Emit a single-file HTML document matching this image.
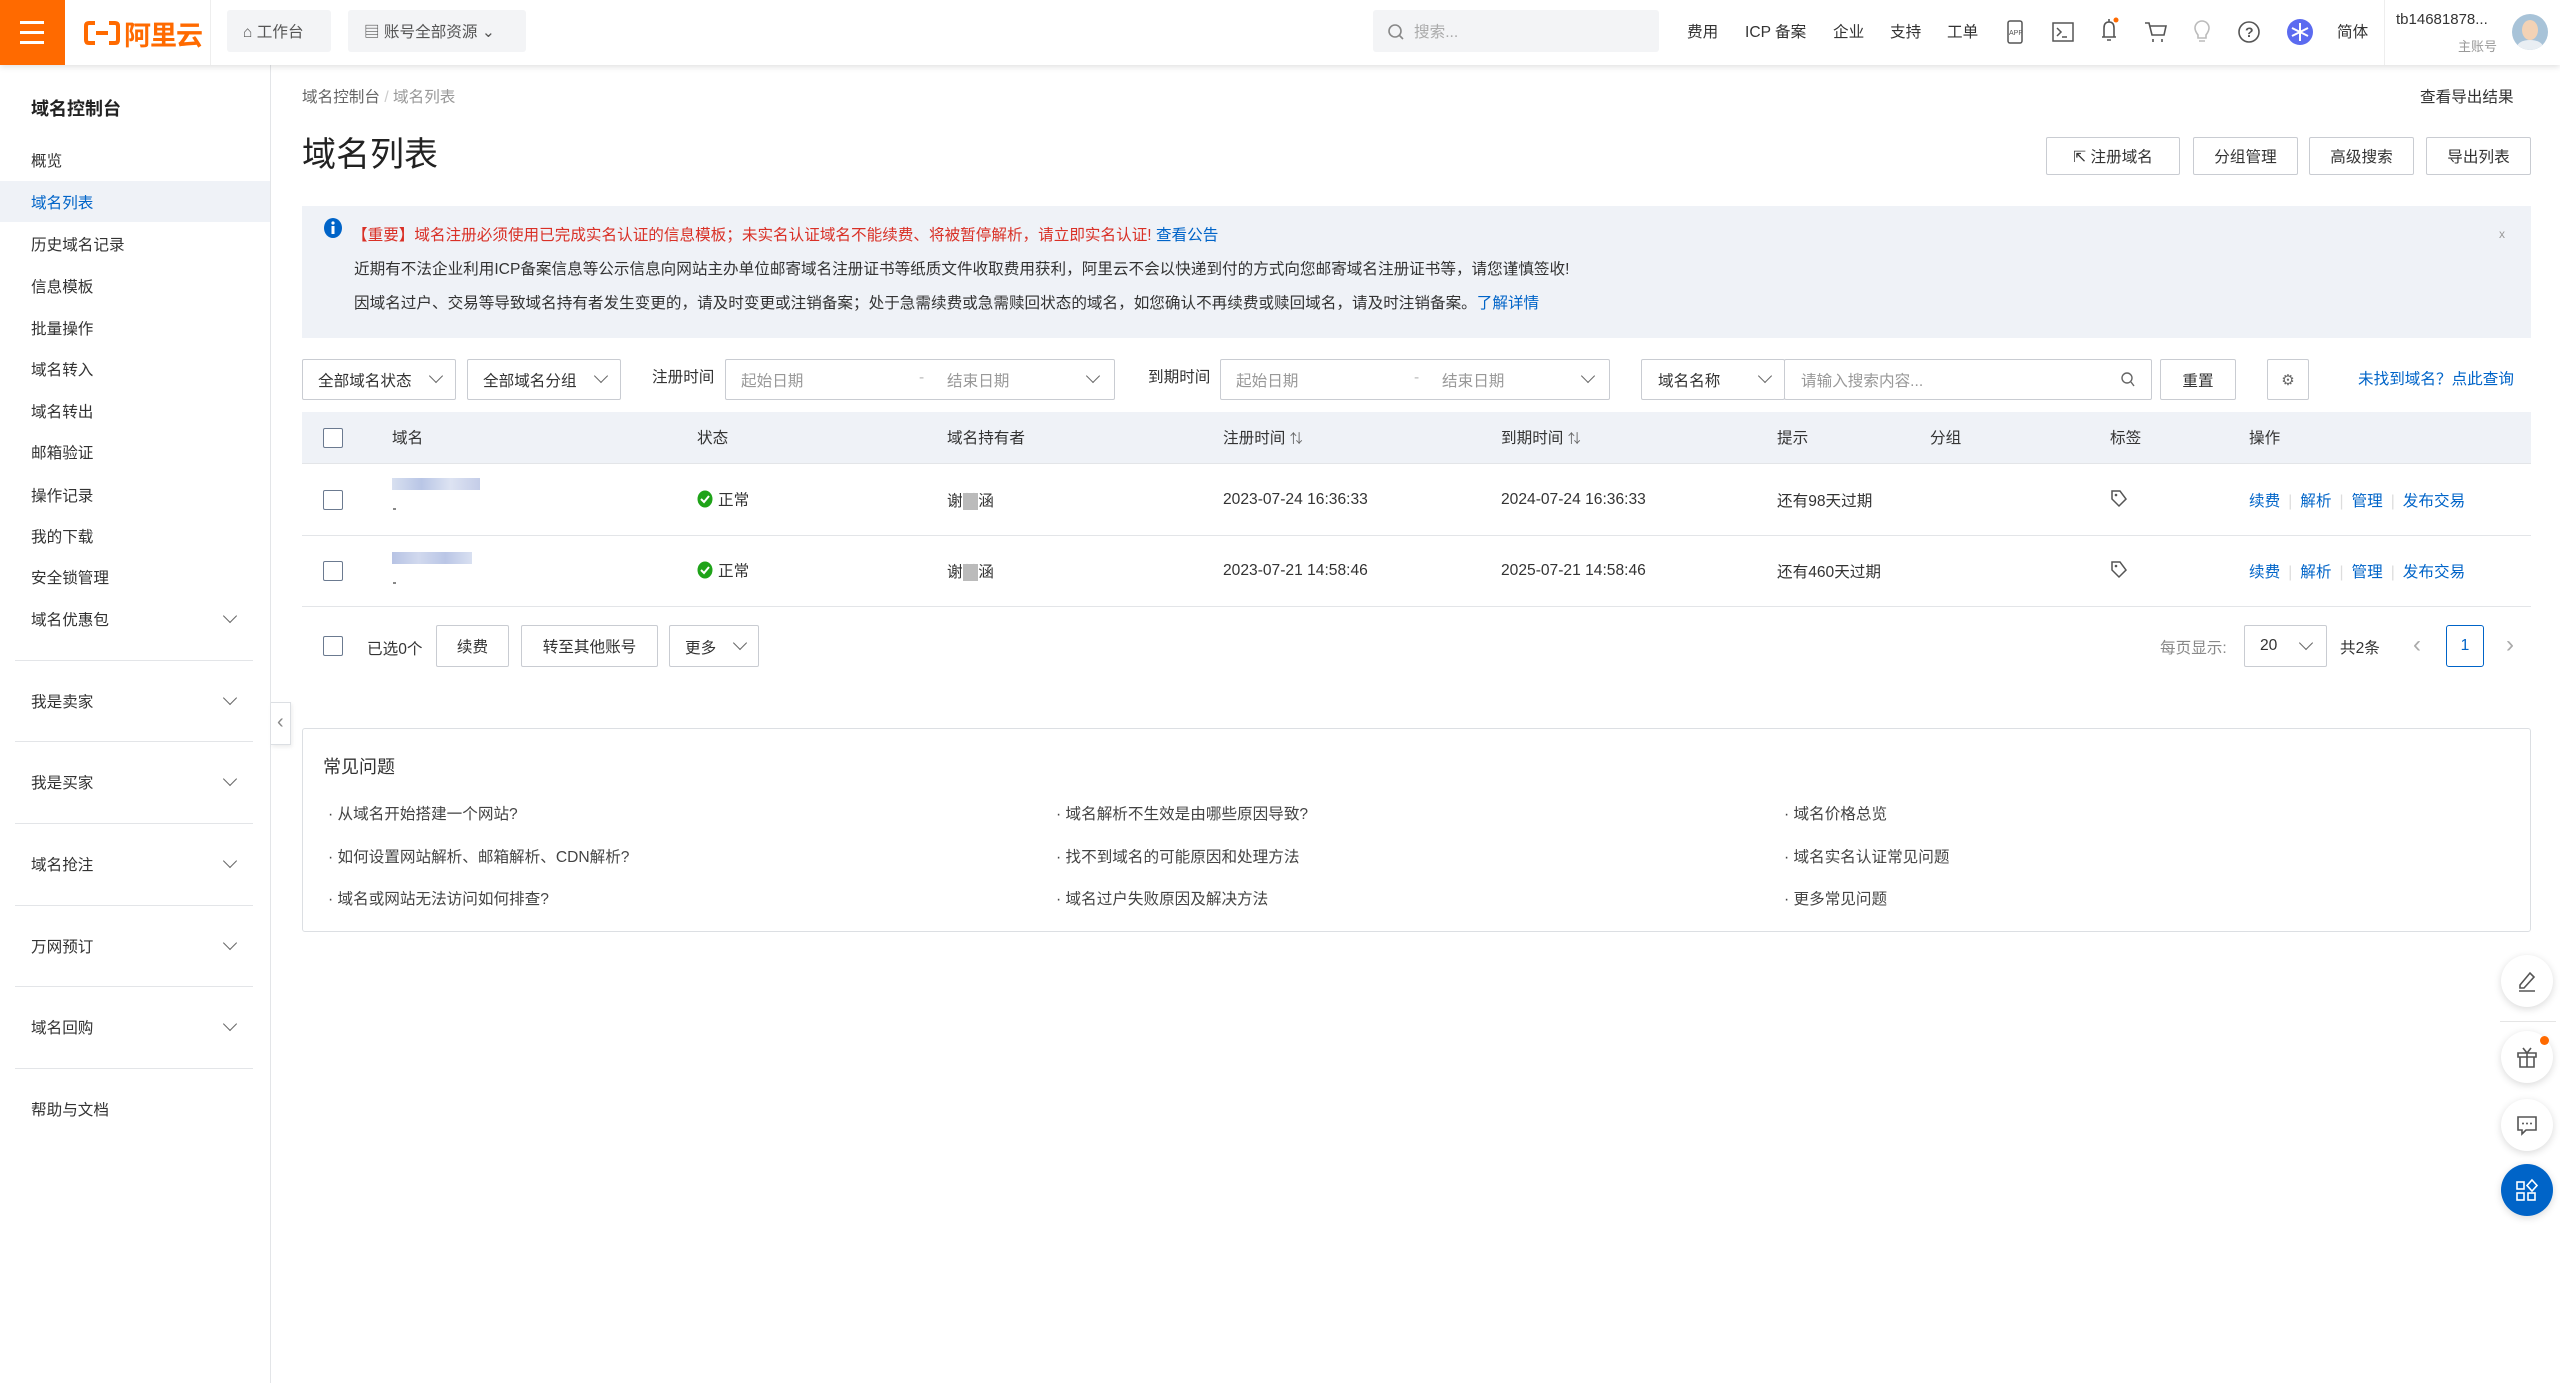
<!DOCTYPE html>
<html><head><meta charset="utf-8">
<style>
*{box-sizing:border-box;margin:0;padding:0}
body{width:2560px;height:1383px;overflow:hidden;background:#fff;font-family:"Liberation Sans","Noto Sans CJK SC",sans-serif;font-size:15.6px;color:#333;position:relative}
.a{position:absolute;white-space:nowrap}
.hdr{position:absolute;left:0;top:0;width:2560px;height:65px;background:#fff;box-shadow:0 2px 6px rgba(0,0,0,.12);z-index:5}
.btn{position:absolute;border:1px solid #c9ccd2;background:#fff;border-radius:2px;display:flex;align-items:center;justify-content:center;color:#333;font-size:15.6px}
.sel{position:absolute;border:1px solid #c9ccd2;background:#fff;border-radius:2px;font-size:15.6px;color:#333}
.chev{position:absolute;width:10px;height:10px;border-right:1.6px solid #666;border-bottom:1.6px solid #666;transform:rotate(45deg)}
.cb{position:absolute;width:20px;height:20px;border:1.5px solid #6b7a90;border-radius:2px;background:#fff}
.lnk{color:#0064c8}
.sp{color:#ddd;margin:0 8px}
.side{color:#333;font-size:15.6px}
.dv{position:absolute;left:15px;width:238px;height:1px;background:#e3e5e8}
.fab{position:absolute;left:2501px;width:52px;height:52px;border-radius:50%;background:#fff;box-shadow:0 2px 8px rgba(0,0,0,.15);display:flex;align-items:center;justify-content:center}
</style></head><body>

<div class="hdr">
  <div class="a" style="left:0;top:0;width:65px;height:65px;background:#ff6a00"></div>
  <div class="a" style="left:20px;top:21px;width:24px;height:3px;background:#fff"></div>
  <div class="a" style="left:20px;top:31px;width:24px;height:3px;background:#fff"></div>
  <div class="a" style="left:20px;top:41px;width:24px;height:3px;background:#fff"></div>
  <svg class="a" style="left:84px;top:20px" width="36" height="26" viewBox="0 0 36 26"><path d="M11 3H5Q2 3 2 6V20Q2 23 5 23H11M25 3H31Q34 3 34 6V20Q34 23 31 23H25M12 13H24" fill="none" stroke="#ff6a00" stroke-width="4"/></svg>
  <div class="a" style="left:124px;top:14px;font-size:27px;font-weight:bold;color:#ff6a00;letter-spacing:-1px">阿里云</div>
  <div class="a" style="left:210px;top:0;width:1px;height:65px;background:#eee"></div>
  <div class="a" style="left:227px;top:10px;width:104px;height:42px;background:#f3f4f6;border-radius:3px"></div>
  <div class="a" style="left:243px;top:20px;font-size:15.6px;color:#555">⌂ 工作台</div>
  <div class="a" style="left:348px;top:10px;width:178px;height:42px;background:#f3f4f6;border-radius:3px"></div>
  <div class="a" style="left:364px;top:20px;font-size:15.6px;color:#555">▤ 账号全部资源 ⌄</div>
  <div class="a" style="left:1373px;top:10px;width:286px;height:42px;background:#f3f4f6;border-radius:3px"></div>
  <svg class="a" style="left:1387px;top:23px" width="18" height="18"><circle cx="8" cy="8" r="6" fill="none" stroke="#888" stroke-width="1.6"/><path d="M12 12L16 16" stroke="#888" stroke-width="1.6"/></svg>
  <div class="a" style="left:1414px;top:20px;color:#aaa">搜索...</div>
  <div class="a" style="left:1687px;top:20px;color:#333">费用</div>
  <div class="a" style="left:1745px;top:20px;color:#333">ICP 备案</div>
  <div class="a" style="left:1833px;top:20px;color:#333">企业</div>
  <div class="a" style="left:1890px;top:20px;color:#333">支持</div>
  <div class="a" style="left:1947px;top:20px;color:#333">工单</div>
  <svg class="a" style="left:2005px;top:20px" width="20" height="24"><rect x="3" y="1" width="14" height="22" rx="2" fill="none" stroke="#555" stroke-width="1.5"/><text x="4" y="15" font-size="7" fill="#555" font-family="Liberation Sans">APP</text></svg>
  <svg class="a" style="left:2052px;top:22px" width="22" height="20"><rect x="1" y="1" width="20" height="18" fill="none" stroke="#555" stroke-width="1.5"/><path d="M5 6L9 10L5 14M10 15H15" fill="none" stroke="#555" stroke-width="1.5"/></svg>
  <svg class="a" style="left:2098px;top:17px" width="22" height="28"><path d="M6 20V11Q6 5 11 5Q16 5 16 11V20H4H18M9 23H13M11 2V5" fill="none" stroke="#555" stroke-width="1.6"/><circle cx="18" cy="3" r="2.5" fill="#ff6a00"/></svg>
  <svg class="a" style="left:2144px;top:21px" width="24" height="22"><path d="M1 2H5L8 14H20L22 5H6M9 18V21M18 18V21" fill="none" stroke="#555" stroke-width="1.6"/></svg>
  <svg class="a" style="left:2193px;top:19px" width="18" height="26"><path d="M5 16Q2 12 2 9A7 7 0 0 1 16 9Q16 12 13 16V19H5ZM6 22H12" fill="none" stroke="#bbb" stroke-width="1.6"/></svg>
  <svg class="a" style="left:2237px;top:20px" width="24" height="24"><circle cx="12" cy="12" r="10" fill="none" stroke="#555" stroke-width="1.6"/><text x="8" y="17" font-size="14" font-weight="bold" fill="#555" font-family="Liberation Sans">?</text></svg>
  <svg class="a" style="left:2286px;top:18px" width="28" height="28"><circle cx="14" cy="14" r="13" fill="#5b6bf0"/><path d="M14 5V23M6 10L22 18M6 18L22 10" stroke="#fff" stroke-width="2"/></svg>
  <div class="a" style="left:2337px;top:20px;color:#333">简体</div>
  <div class="a" style="left:2384px;top:0;width:1px;height:65px;background:#eee"></div>
  <div class="a" style="left:2396px;top:11px;font-size:15px;color:#333">tb14681878...</div>
  <div class="a" style="left:2458px;top:36px;font-size:13px;color:#999">主账号</div>
  <div class="a" style="left:2512px;top:14px;width:36px;height:36px;border-radius:50%;background:#a8c3d8;overflow:hidden"><div style="position:absolute;left:10px;top:6px;width:16px;height:20px;border-radius:50%;background:#f3d2b5"></div><div style="position:absolute;left:5px;top:26px;width:26px;height:14px;border-radius:50%;background:#e9eef3"></div></div>
</div>

<!-- sidebar -->
<div class="a" style="left:270px;top:65px;width:1px;height:1318px;background:#e3e5e8"></div>
<div class="a" style="left:31px;top:95px;font-size:18px;font-weight:bold;color:#222">域名控制台</div>
<div class="a side" style="left:31px;top:149px">概览</div>
<div class="a" style="left:0;top:181px;width:270px;height:41px;background:#eff2f7"></div>
<div class="a side" style="left:31px;top:191px;color:#0064c8">域名列表</div>
<div class="a side" style="left:31px;top:233px">历史域名记录</div>
<div class="a side" style="left:31px;top:275px">信息模板</div>
<div class="a side" style="left:31px;top:317px">批量操作</div>
<div class="a side" style="left:31px;top:358px">域名转入</div>
<div class="a side" style="left:31px;top:400px">域名转出</div>
<div class="a side" style="left:31px;top:441px">邮箱验证</div>
<div class="a side" style="left:31px;top:484px">操作记录</div>
<div class="a side" style="left:31px;top:525px">我的下载</div>
<div class="a side" style="left:31px;top:566px">安全锁管理</div>
<div class="a side" style="left:31px;top:608px">域名优惠包</div><div class="chev" style="left:225px;top:611px"></div>
<div class="dv" style="top:660px"></div>
<div class="a side" style="left:31px;top:690px">我是卖家</div><div class="chev" style="left:225px;top:693px"></div>
<div class="dv" style="top:741px"></div>
<div class="a side" style="left:31px;top:771px">我是买家</div><div class="chev" style="left:225px;top:774px"></div>
<div class="dv" style="top:823px"></div>
<div class="a side" style="left:31px;top:853px">域名抢注</div><div class="chev" style="left:225px;top:856px"></div>
<div class="dv" style="top:905px"></div>
<div class="a side" style="left:31px;top:935px">万网预订</div><div class="chev" style="left:225px;top:938px"></div>
<div class="dv" style="top:986px"></div>
<div class="a side" style="left:31px;top:1016px">域名回购</div><div class="chev" style="left:225px;top:1019px"></div>
<div class="dv" style="top:1068px"></div>
<div class="a side" style="left:31px;top:1098px">帮助与文档</div>
<div class="a" style="left:271px;top:702px;width:20px;height:43px;background:#fff;border:1px solid #dcdfe3;border-left:none;box-shadow:1px 2px 4px rgba(0,0,0,.08)"></div>
<div class="a" style="left:277px;top:711px;color:#888;font-size:20px">‹</div>

<!-- content -->
<div class="a" style="left:302px;top:85px;color:#666">域名控制台 <span style="color:#ccc">/</span> <span style="color:#999">域名列表</span></div>
<div class="a" style="left:2420px;top:85px;color:#333">查看导出结果</div>
<div class="a" style="left:302px;top:127px;font-size:34px;color:#222">域名列表</div>
<div class="btn" style="left:2046px;top:137px;width:134px;height:38px">⇱&nbsp;注册域名</div>
<div class="btn" style="left:2193px;top:137px;width:105px;height:38px">分组管理</div>
<div class="btn" style="left:2309px;top:137px;width:105px;height:38px">高级搜索</div>
<div class="btn" style="left:2426px;top:137px;width:105px;height:38px">导出列表</div>

<div class="a" style="left:302px;top:206px;width:2229px;height:132px;background:#eff2f7"></div>
<svg class="a" style="left:323px;top:217px" width="20" height="22"><ellipse cx="10" cy="11" rx="9" ry="10" fill="#0064c8"/><rect x="8.5" y="9" width="3" height="8" fill="#fff"/><circle cx="10" cy="6" r="1.6" fill="#fff"/></svg>
<div class="a" style="left:352px;top:223px;color:#d93026">【重要】域名注册必须使用已完成实名认证的信息模板；未实名认证域名不能续费、将被暂停解析，请立即实名认证! <span class="lnk">查看公告</span></div>
<div class="a" style="left:354px;top:257px;color:#333">近期有不法企业利用ICP备案信息等公示信息向网站主办单位邮寄域名注册证书等纸质文件收取费用获利，阿里云不会以快递到付的方式向您邮寄域名注册证书等，请您谨慎签收!</div>
<div class="a" style="left:354px;top:291px;color:#333">因域名过户、交易等导致域名持有者发生变更的，请及时变更或注销备案；处于急需续费或急需赎回状态的域名，如您确认不再续费或赎回域名，请及时注销备案。<span class="lnk">了解详情</span></div>
<div class="a" style="left:2499px;top:227px;color:#999;font-size:12px">x</div>

<!-- filters -->
<div class="sel" style="left:302px;top:359px;width:154px;height:41px"><span class="a" style="left:15px;top:9px">全部域名状态</span><div class="chev" style="left:128px;top:11px"></div></div>
<div class="sel" style="left:467px;top:359px;width:154px;height:41px"><span class="a" style="left:15px;top:9px">全部域名分组</span><div class="chev" style="left:128px;top:11px"></div></div>
<div class="a" style="left:652px;top:365px">注册时间</div>
<div class="sel" style="left:725px;top:359px;width:390px;height:41px"><span class="a" style="left:15px;top:9px;color:#999">起始日期</span><span class="a" style="left:193px;top:9px;color:#bbb">-</span><span class="a" style="left:221px;top:9px;color:#999">结束日期</span><div class="chev" style="left:362px;top:11px"></div></div>
<div class="a" style="left:1148px;top:365px">到期时间</div>
<div class="sel" style="left:1220px;top:359px;width:390px;height:41px"><span class="a" style="left:15px;top:9px;color:#999">起始日期</span><span class="a" style="left:193px;top:9px;color:#bbb">-</span><span class="a" style="left:221px;top:9px;color:#999">结束日期</span><div class="chev" style="left:362px;top:11px"></div></div>
<div class="sel" style="left:1641px;top:359px;width:144px;height:41px"><span class="a" style="left:16px;top:9px">域名名称</span><div class="chev" style="left:118px;top:11px"></div></div>
<div class="sel" style="left:1784px;top:359px;width:368px;height:41px"><span class="a" style="left:16px;top:9px;color:#999">请输入搜索内容...</span><svg class="a" style="left:336px;top:12px" width="14" height="16"><circle cx="6" cy="6" r="5" fill="none" stroke="#666" stroke-width="1.4"/><path d="M10 10L13 14" stroke="#666" stroke-width="1.4"/></svg></div>
<div class="btn" style="left:2160px;top:359px;width:76px;height:41px">重置</div>
<div class="btn" style="left:2267px;top:359px;width:42px;height:41px;color:#666;font-size:15px">⚙</div>
<div class="a lnk" style="left:2358px;top:367px">未找到域名？点此查询</div>

<!-- table -->
<div class="a" style="left:302px;top:412px;width:2229px;height:52px;background:#eff2f7;border-bottom:1px solid #e3e5e8"></div>
<div class="cb" style="left:323px;top:428px"></div>
<div class="a" style="left:392px;top:426px">域名</div>
<div class="a" style="left:697px;top:426px">状态</div>
<div class="a" style="left:947px;top:426px">域名持有者</div>
<div class="a" style="left:1223px;top:426px">注册时间 <span style="font-size:13px;color:#666">⇅</span></div>
<div class="a" style="left:1501px;top:426px">到期时间 <span style="font-size:13px;color:#666">⇅</span></div>
<div class="a" style="left:1777px;top:426px">提示</div>
<div class="a" style="left:1930px;top:426px">分组</div>
<div class="a" style="left:2110px;top:426px">标签</div>
<div class="a" style="left:2249px;top:426px">操作</div>

<div class="a" style="left:302px;top:535px;width:2229px;height:1px;background:#e3e5e8"></div>
<div class="a" style="left:302px;top:606px;width:2229px;height:1px;background:#e3e5e8"></div>

<div class="cb" style="left:323px;top:490px"></div>
<div class="a" style="left:392px;top:478px;width:88px;height:12px;background:linear-gradient(90deg,#d8e0f0,#b9c6e6,#dde3f2,#c4cde8)"></div>
<div class="a" style="left:393px;top:508px;width:3px;height:2px;background:#888"></div>
<svg class="a" style="left:697px;top:490px" width="16" height="18"><ellipse cx="8" cy="9" rx="7.5" ry="8.5" fill="#1fa319"/><path d="M4 9L7 12L12 6" fill="none" stroke="#fff" stroke-width="2"/></svg>
<div class="a" style="left:718px;top:488px">正常</div>
<div class="a" style="left:947px;top:489px">谢<span style="background:#bbb;color:#bbb">某</span>涵</div>
<div class="a" style="left:1223px;top:491px">2023-07-24 16:36:33</div>
<div class="a" style="left:1501px;top:491px">2024-07-24 16:36:33</div>
<div class="a" style="left:1777px;top:489px">还有98天过期</div>
<svg class="a" style="left:2110px;top:489px" width="18" height="20"><path d="M2 2H10L16 10L9 17L2 10Z" fill="none" stroke="#555" stroke-width="1.5"/><circle cx="6" cy="6" r="1.3" fill="#555"/></svg>
<div class="a lnk" style="left:2249px;top:489px">续费<span class="sp">|</span>解析<span class="sp">|</span>管理<span class="sp">|</span>发布交易</div>

<div class="cb" style="left:323px;top:561px"></div>
<div class="a" style="left:392px;top:552px;width:80px;height:12px;background:linear-gradient(90deg,#b7c3e4,#d1d9ee,#bac6e6,#d9e0f1)"></div>
<div class="a" style="left:393px;top:582px;width:3px;height:2px;background:#888"></div>
<svg class="a" style="left:697px;top:561px" width="16" height="18"><ellipse cx="8" cy="9" rx="7.5" ry="8.5" fill="#1fa319"/><path d="M4 9L7 12L12 6" fill="none" stroke="#fff" stroke-width="2"/></svg>
<div class="a" style="left:718px;top:559px">正常</div>
<div class="a" style="left:947px;top:560px">谢<span style="background:#bbb;color:#bbb">某</span>涵</div>
<div class="a" style="left:1223px;top:562px">2023-07-21 14:58:46</div>
<div class="a" style="left:1501px;top:562px">2025-07-21 14:58:46</div>
<div class="a" style="left:1777px;top:560px">还有460天过期</div>
<svg class="a" style="left:2110px;top:560px" width="18" height="20"><path d="M2 2H10L16 10L9 17L2 10Z" fill="none" stroke="#555" stroke-width="1.5"/><circle cx="6" cy="6" r="1.3" fill="#555"/></svg>
<div class="a lnk" style="left:2249px;top:560px">续费<span class="sp">|</span>解析<span class="sp">|</span>管理<span class="sp">|</span>发布交易</div>

<!-- bottom bar -->
<div class="cb" style="left:323px;top:636px"></div>
<div class="a" style="left:367px;top:637px">已选0个</div>
<div class="btn" style="left:436px;top:625px;width:73px;height:42px">续费</div>
<div class="btn" style="left:521px;top:625px;width:137px;height:42px">转至其他账号</div>
<div class="sel" style="left:669px;top:625px;width:90px;height:42px"><span class="a" style="left:15px;top:10px">更多</span><div class="chev" style="left:65px;top:12px"></div></div>
<div class="a" style="left:2160px;top:636px;color:#888">每页显示:</div>
<div class="sel" style="left:2244px;top:625px;width:83px;height:42px"><span class="a" style="left:15px;top:11px">20</span><div class="chev" style="left:56px;top:12px"></div></div>
<div class="a" style="left:2340px;top:636px">共2条</div>
<div class="a" style="left:2413px;top:631px;color:#aaa;font-size:24px">‹</div>
<div class="a" style="left:2446px;top:625px;width:38px;height:42px;border:1.5px solid #0064c8;border-radius:3px;color:#0064c8;text-align:center;line-height:39px">1</div>
<div class="a" style="left:2506px;top:631px;color:#aaa;font-size:24px">›</div>

<!-- FAQ -->
<div class="a" style="left:302px;top:728px;width:2229px;height:204px;border:1px solid #dcdfe3;border-radius:3px"></div>
<div class="a" style="left:323px;top:753px;font-size:18px;color:#333">常见问题</div>
<div class="a" style="left:328px;top:802px;color:#444">·&nbsp;从域名开始搭建一个网站?</div>
<div class="a" style="left:328px;top:845px;color:#444">·&nbsp;如何设置网站解析、邮箱解析、CDN解析?</div>
<div class="a" style="left:328px;top:887px;color:#444">·&nbsp;域名或网站无法访问如何排查?</div>
<div class="a" style="left:1056px;top:802px;color:#444">·&nbsp;域名解析不生效是由哪些原因导致?</div>
<div class="a" style="left:1056px;top:845px;color:#444">·&nbsp;找不到域名的可能原因和处理方法</div>
<div class="a" style="left:1056px;top:887px;color:#444">·&nbsp;域名过户失败原因及解决方法</div>
<div class="a" style="left:1784px;top:802px;color:#444">·&nbsp;域名价格总览</div>
<div class="a" style="left:1784px;top:845px;color:#444">·&nbsp;域名实名认证常见问题</div>
<div class="a" style="left:1784px;top:887px;color:#444">·&nbsp;更多常见问题</div>

<!-- floating -->
<div class="fab" style="top:955px"><svg width="22" height="22"><path d="M4 15L14 3L18 7L8 18H4ZM3 21H19" fill="none" stroke="#555" stroke-width="1.6"/></svg></div>
<div class="a" style="left:2500px;top:1021px;width:56px;height:1px;background:#e5e5e5"></div>
<div class="fab" style="top:1031px"><svg width="24" height="24"><path d="M3 8H21V12H3ZM5 12V22H19V12M12 8V22M12 8L8 3M12 8L16 3" fill="none" stroke="#555" stroke-width="1.6"/></svg></div>
<div class="a" style="left:2540px;top:1036px;width:9px;height:9px;border-radius:50%;background:#ff6a00"></div>
<div class="fab" style="top:1099px"><svg width="22" height="22"><path d="M2 3H20V16H10L6 20V16H2Z" fill="none" stroke="#555" stroke-width="1.6"/><circle cx="7" cy="9.5" r="1" fill="#555"/><circle cx="11" cy="9.5" r="1" fill="#555"/><circle cx="15" cy="9.5" r="1" fill="#555"/></svg></div>
<div class="fab" style="top:1164px;background:#0064c8"><svg width="24" height="24"><rect x="2" y="4" width="7" height="7" fill="none" stroke="#fff" stroke-width="1.6"/><path d="M17 2L22 7.5L17 13L12 7.5Z" fill="none" stroke="#fff" stroke-width="1.6"/><rect x="2" y="15" width="7" height="7" fill="none" stroke="#fff" stroke-width="1.6"/><rect x="13" y="15" width="7" height="7" fill="none" stroke="#fff" stroke-width="1.6"/></svg></div>

</body></html>
